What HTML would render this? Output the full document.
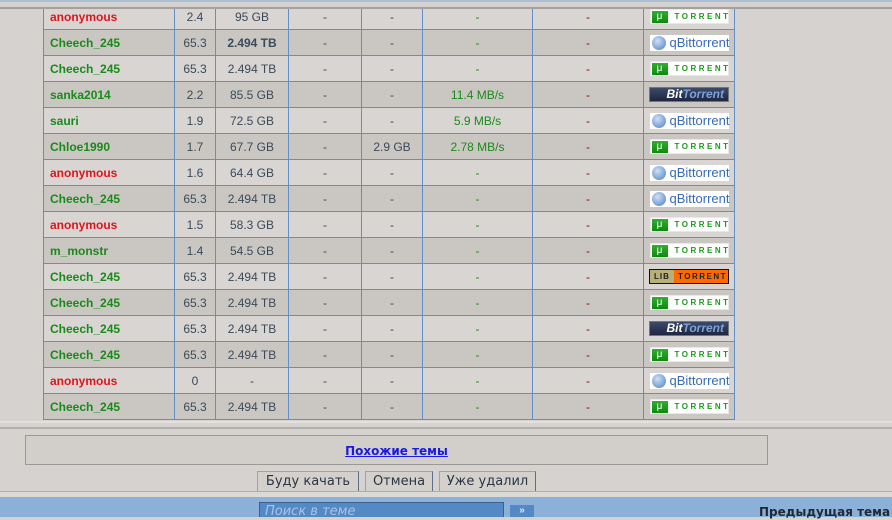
<!DOCTYPE html>
<html><head><meta charset="utf-8"><style>
*{margin:0;padding:0;box-sizing:border-box}
body{width:892px;height:517px;overflow:hidden;background:#d5d2cf;font-family:"Liberation Sans","DejaVu Sans",sans-serif;position:relative}
.topl{position:absolute;left:0;top:0;width:892px;height:2px;background:#a9bfd6}
.topbg{position:absolute;left:0;top:0;width:892px;height:8px;background:#d5d2cf}
.top2{position:absolute;left:0;top:7px;width:892px;height:2px;background:#a4a19d}
table{position:absolute;left:43px;top:3px;border-collapse:collapse;table-layout:fixed}
td{border:1px solid #6190c6;height:26px;font-size:12px;color:#3b4a5a;text-align:center;padding:0;white-space:nowrap}
tr:nth-child(odd) td{background:#d8d5d2}
tr:nth-child(even) td{background:#cac7c2}
td.n{text-align:left;padding-left:6px;font-weight:bold}
.r{color:#e0141c}.g{color:#1a8a1a}
td.s{color:#1a8a1a}
td.d{color:#8b1010}
.ut{display:inline-block;width:79px;height:15px;background:#fff;position:relative;vertical-align:middle;border:1px solid #e8e8e8}
.ut b{position:absolute;left:1px;top:1px;width:16px;height:12px;background:linear-gradient(#2fae2f,#0d8a0d);color:#fff;font-size:10px;line-height:12px;font-weight:normal}
.ut i{position:absolute;left:24px;top:2px;font-style:normal;font-size:8px;font-weight:bold;letter-spacing:2.5px;color:#1a9a1a}
.qb{display:inline-block;width:79px;height:16px;background:#fff;position:relative;vertical-align:middle}
.qb b{position:absolute;left:2px;top:1px;width:14px;height:14px;border-radius:50%;background:radial-gradient(circle at 40% 35%,#cfe0f5,#4a7ec4);}
.qb i{position:absolute;left:20px;top:0;font-style:normal;font-size:13px;line-height:16px;color:#3a6ab8}
.bt{display:inline-block;width:80px;height:15px;background:linear-gradient(#3c4a6a,#1e2640);border:1px solid #777;vertical-align:middle;font-style:italic;font-weight:bold;font-size:12px;line-height:13px;color:#fff;text-align:right;padding-right:4px}
.bt span{color:#7fa0d8}
.lib{display:inline-block;width:80px;height:15px;border:1px solid #111;vertical-align:middle;position:relative;background:#ff6a00}
.lib b{position:absolute;left:0;top:0;width:24px;height:13px;background:#b8b07a;font-size:8px;line-height:13px;letter-spacing:1px;color:#222}
.lib i{position:absolute;left:28px;top:0;font-style:normal;font-weight:bold;font-size:8px;line-height:13px;letter-spacing:1.5px;color:#222}
.cover{position:absolute;left:0;top:420px;width:892px;height:97px;background:#d5d2cf}
.l1{position:absolute;left:0;top:421px;width:892px;height:2px;background:#e2dfdc}
.l2{position:absolute;left:0;top:427px;width:892px;height:2px;background:#b3b0ac}
.box{position:absolute;left:25px;top:435px;width:743px;height:30px;border:1px solid #9a9895;background:#d2cfcb;text-align:center;font-family:"DejaVu Sans",sans-serif;font-size:12px;font-weight:bold;line-height:30px}
.box a{color:#1a1ae0;text-decoration:underline}
.btn{position:absolute;top:471px;height:21px;border:1px solid #8aa6c4;border-right-color:#5b6e86;border-bottom-color:#5b6e86;background:#d4d1cd;font-family:"DejaVu Sans",sans-serif;font-size:13px;color:#2a3644;text-align:center;line-height:19px}
.band{position:absolute;left:0;top:491px;width:892px;height:6px;background:#dcdad6;border-top:1px solid #b0ada9}
.blue{position:absolute;left:0;top:497px;width:892px;height:20px;background:#8cb1d9}
.inp{position:absolute;left:259px;top:502px;width:245px;height:15px;background:#5389c4;border:1px solid #3d5f8a;border-bottom:none;color:#a9c4e6;font-style:italic;font-family:"DejaVu Sans",sans-serif;font-size:13px;line-height:17px;padding-left:5px}
.go{position:absolute;left:510px;top:505px;width:24px;height:12px;background:#5389c4;color:#dfe9f5;font-size:10px;font-weight:bold;text-align:center;line-height:12px}
.prev{position:absolute;left:759px;top:505px;font-family:"DejaVu Sans",sans-serif;font-size:12px;font-weight:bold;color:#1e2a38;white-space:nowrap}
</style></head><body>
<table>
<colgroup><col style="width:131px"><col style="width:41px"><col style="width:73px"><col style="width:73px"><col style="width:61px"><col style="width:110px"><col style="width:111px"><col style="width:91px"></colgroup>
<tr><td class="n r">anonymous</td><td>2.4</td><td>95 GB</td><td>-</td><td>-</td><td class="s">-</td><td class="d">-</td><td><span class="ut"><b>μ</b><i>TORRENT</i></span></td></tr>
<tr><td class="n g">Cheech_245</td><td>65.3</td><td><b>2.494 TB</b></td><td>-</td><td>-</td><td class="s">-</td><td class="d">-</td><td><span class="qb"><b></b><i>qBittorrent</i></span></td></tr>
<tr><td class="n g">Cheech_245</td><td>65.3</td><td>2.494 TB</td><td>-</td><td>-</td><td class="s">-</td><td class="d">-</td><td><span class="ut"><b>μ</b><i>TORRENT</i></span></td></tr>
<tr><td class="n g">sanka2014</td><td>2.2</td><td>85.5 GB</td><td>-</td><td>-</td><td class="s">11.4 MB/s</td><td class="d">-</td><td><span class="bt">Bit<span>Torrent</span></span></td></tr>
<tr><td class="n g">sauri</td><td>1.9</td><td>72.5 GB</td><td>-</td><td>-</td><td class="s">5.9 MB/s</td><td class="d">-</td><td><span class="qb"><b></b><i>qBittorrent</i></span></td></tr>
<tr><td class="n g">Chloe1990</td><td>1.7</td><td>67.7 GB</td><td>-</td><td>2.9 GB</td><td class="s">2.78 MB/s</td><td class="d">-</td><td><span class="ut"><b>μ</b><i>TORRENT</i></span></td></tr>
<tr><td class="n r">anonymous</td><td>1.6</td><td>64.4 GB</td><td>-</td><td>-</td><td class="s">-</td><td class="d">-</td><td><span class="qb"><b></b><i>qBittorrent</i></span></td></tr>
<tr><td class="n g">Cheech_245</td><td>65.3</td><td>2.494 TB</td><td>-</td><td>-</td><td class="s">-</td><td class="d">-</td><td><span class="qb"><b></b><i>qBittorrent</i></span></td></tr>
<tr><td class="n r">anonymous</td><td>1.5</td><td>58.3 GB</td><td>-</td><td>-</td><td class="s">-</td><td class="d">-</td><td><span class="ut"><b>μ</b><i>TORRENT</i></span></td></tr>
<tr><td class="n g">m_monstr</td><td>1.4</td><td>54.5 GB</td><td>-</td><td>-</td><td class="s">-</td><td class="d">-</td><td><span class="ut"><b>μ</b><i>TORRENT</i></span></td></tr>
<tr><td class="n g">Cheech_245</td><td>65.3</td><td>2.494 TB</td><td>-</td><td>-</td><td class="s">-</td><td class="d">-</td><td><span class="lib"><b>LIB</b><i>TORRENT</i></span></td></tr>
<tr><td class="n g">Cheech_245</td><td>65.3</td><td>2.494 TB</td><td>-</td><td>-</td><td class="s">-</td><td class="d">-</td><td><span class="ut"><b>μ</b><i>TORRENT</i></span></td></tr>
<tr><td class="n g">Cheech_245</td><td>65.3</td><td>2.494 TB</td><td>-</td><td>-</td><td class="s">-</td><td class="d">-</td><td><span class="bt">Bit<span>Torrent</span></span></td></tr>
<tr><td class="n g">Cheech_245</td><td>65.3</td><td>2.494 TB</td><td>-</td><td>-</td><td class="s">-</td><td class="d">-</td><td><span class="ut"><b>μ</b><i>TORRENT</i></span></td></tr>
<tr><td class="n r">anonymous</td><td>0</td><td>-</td><td>-</td><td>-</td><td class="s">-</td><td class="d">-</td><td><span class="qb"><b></b><i>qBittorrent</i></span></td></tr>
<tr><td class="n g">Cheech_245</td><td>65.3</td><td>2.494 TB</td><td>-</td><td>-</td><td class="s">-</td><td class="d">-</td><td><span class="ut"><b>μ</b><i>TORRENT</i></span></td></tr>
</table>
<div class="topbg"></div><div class="topl"></div><div class="top2"></div>
<div class="cover"></div><div class="l1"></div><div class="l2"></div>
<div class="box"><a>Похожие темы</a></div>
<div class="btn" style="left:257px;width:102px">Буду качать</div>
<div class="btn" style="left:365px;width:68px">Отмена</div>
<div class="btn" style="left:439px;width:97px">Уже удалил</div>
<div class="band"></div>
<div class="blue"></div>
<div class="inp">Поиск в теме</div>
<div class="go">»</div>
<div class="prev">Предыдущая тема :: (</div>
</body></html>
